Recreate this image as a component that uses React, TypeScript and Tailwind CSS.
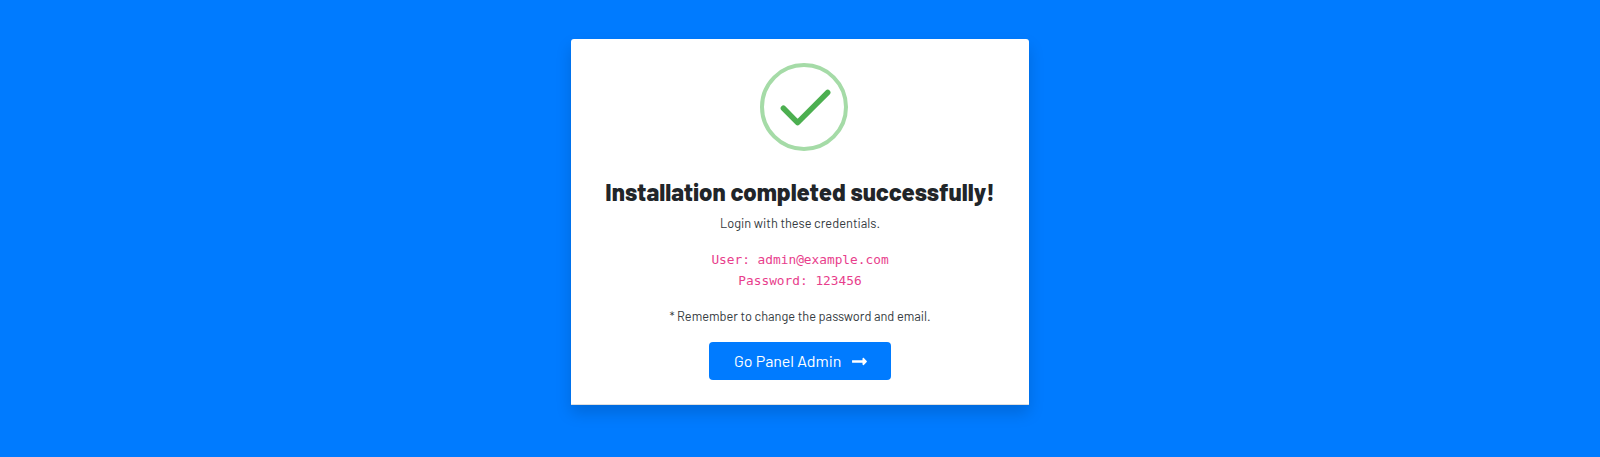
import React from 'react';
import { FaLongArrowAltRight } from 'react-icons/fa';

function SuccessIcon() {
  return (
    <svg className="ml-2 block" width="88" height="88" viewBox="0 0 88 88" fill="none">
      <circle cx="44" cy="44" r="42" stroke="#a5dba7" strokeWidth="4" />
      <path d="M23.4 45.2 37.6 59.6 67.7 29.5" stroke="#4caf50" strokeWidth="5.5" strokeLinecap="round" strokeLinejoin="round" />
    </svg>
  );
}

export default function App() {
  return (
    <main className="flex h-[457px] w-full justify-center bg-[#007bff] pt-[39px] font-['Barlow','Roboto',sans-serif] text-[#212529]">
      <section className="flex h-[366px] w-[458px] flex-col items-center whitespace-nowrap rounded-t-[3px] border-b border-[#dfdfdf] bg-white pt-6 shadow-[0_8px_16px_rgba(0,0,0,0.15)]">
        <SuccessIcon />
        <h1 className="mt-[26px] text-[24px] font-extrabold leading-[30px]">Installation completed successfully!</h1>
        <p className="mt-[6px] text-[12.8px] leading-5 text-[#343a40]">Login with these credentials.</p>
        <div className="mt-4 text-center font-['DejaVu_Sans_Mono',monospace] text-[12.8px] leading-[21px] text-[#e83e8c]">
          <p>User: admin@example.com</p>
          <p>Password: 123456</p>
        </div>
        <p className="mt-[15px] text-[12.8px] leading-5 text-[#343a40]">* Remember to change the password and email.</p>
        <button className="mt-4 flex h-[38px] w-[182px] items-center rounded bg-[#007bff] pl-[25px] text-[16px] text-white">
          <span>Go Panel Admin</span>
          <FaLongArrowAltRight className="ml-[9.5px] h-[17px] w-[17px]" />
        </button>
      </section>
    </main>
  );
}
